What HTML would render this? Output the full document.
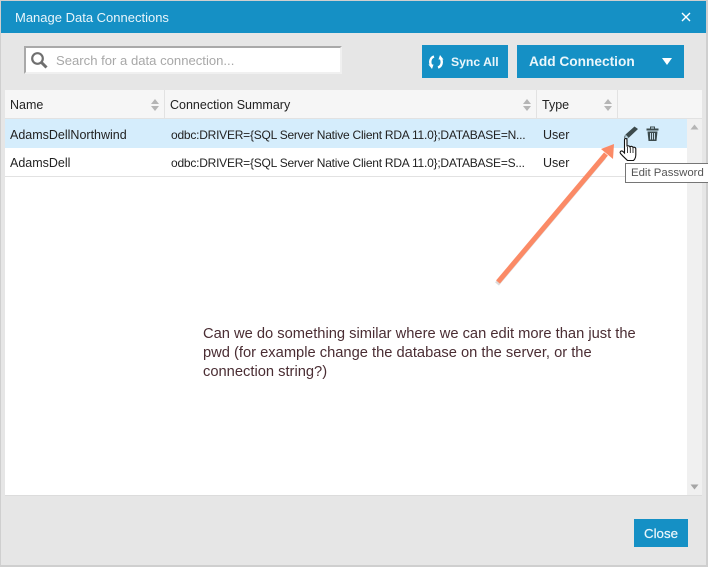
<!DOCTYPE html>
<html>
<head>
<meta charset="utf-8">
<style>
html,body{margin:0;padding:0;}
body{width:708px;height:567px;overflow:hidden;position:relative;background:#e6e6e6;font-family:"Liberation Sans",sans-serif;}
.a{position:absolute;}
.t{position:absolute;white-space:nowrap;font-size:12.5px;line-height:16px;color:#222;}
.s{font-size:12px;letter-spacing:-0.23px;}
.b{font-weight:bold;}
</style>
</head>
<body>
<div class="a" style="left:0;top:0;width:705px;height:564px;border:1px solid #cfcfcf;border-width:1px 2px 2px 1px;"></div>
<div class="a" style="left:1px;top:1px;width:705px;height:32px;background:#1590c5;"></div>
<div class="t" style="left:15px;top:10px;color:#e8f5fb;font-size:13px;">Manage Data Connections</div>
<svg class="a" style="left:681px;top:12px" width="10" height="10" viewBox="0 0 10 10"><path d="M1 1L9 9M9 1L1 9" stroke="#fff" stroke-width="1.4"/></svg>

<div class="a" style="left:24px;top:46px;width:318px;height:28px;background:#fff;box-sizing:border-box;border-top:2px solid #a9a9a9;border-left:2px solid #a9a9a9;border-right:2px solid #f0f0f0;border-bottom:2px solid #f0f0f0;"></div>
<svg class="a" style="left:30px;top:51px" width="19" height="19" viewBox="0 0 19 19"><circle cx="7.500" cy="7.500" r="5.300" fill="none" stroke="#6f6f6f" stroke-width="2.200"/><path d="M11.500 11.500L16.500 16.500" stroke="#6f6f6f" stroke-width="3"/></svg>
<div class="t" style="left:56px;top:53px;color:#a8a8a8;font-size:13.100px;">Search for a data connection...</div>

<div class="a" style="left:422px;top:45px;width:86px;height:33px;background:#1590c5;"></div>
<svg class="a" style="left:427px;top:53px" width="18" height="18" viewBox="0 0 18 18"><path d="M7 3.500C3.500 4.500 2 9 4.500 13" fill="none" stroke="#fff" stroke-width="2.400"/><path d="M1.500 11.500L6.500 11.500L5 16Z" fill="#fff"/><path d="M11 14.500C14.500 13.500 16 9 13.500 5" fill="none" stroke="#fff" stroke-width="2.400"/><path d="M16.500 6.500L11.500 6.500L13 2Z" fill="#fff"/></svg>
<div class="t b" style="left:451px;top:54px;color:#eaf6fb;font-size:12.200px;">Sync All</div>
<div class="a" style="left:517px;top:45px;width:167px;height:33px;background:#1590c5;"></div>
<div class="t b" style="left:529px;top:54px;color:#eaf6fb;font-size:13.700px;">Add Connection</div>
<svg class="a" style="left:661px;top:57px" width="12" height="9" viewBox="0 0 12 9"><path d="M1 1H11L6 8Z" fill="#fff"/></svg>

<!-- grid -->
<div class="a" style="left:5px;top:90px;width:697px;height:405px;background:#fff;border-bottom:1px solid #dcdcdc;"></div>
<div class="a" style="left:5px;top:90px;width:697px;height:28px;background:#f6f6f6;border-bottom:1px solid #e2e2e2;"></div>
<div class="a" style="left:164px;top:90px;width:1px;height:28px;background:#e2e2e2;"></div>
<div class="a" style="left:536px;top:90px;width:1px;height:28px;background:#e2e2e2;"></div>
<div class="a" style="left:617px;top:90px;width:1px;height:28px;background:#e2e2e2;"></div>
<div class="t" style="left:10px;top:97px;">Name</div>
<div class="t" style="left:170px;top:97px;">Connection Summary</div>
<div class="t" style="left:542px;top:97px;">Type</div>
<svg class="a" style="left:150px;top:98px" width="10" height="14" viewBox="0 0 10 14"><path d="M5 1L9 6H1ZM1 8H9L5 13Z" fill="#b5b5b5"/></svg>
<svg class="a" style="left:522px;top:98px" width="10" height="14" viewBox="0 0 10 14"><path d="M5 1L9 6H1ZM1 8H9L5 13Z" fill="#b5b5b5"/></svg>
<svg class="a" style="left:603px;top:98px" width="10" height="14" viewBox="0 0 10 14"><path d="M5 1L9 6H1ZM1 8H9L5 13Z" fill="#b5b5b5"/></svg>

<div class="a" style="left:5px;top:119px;width:682px;height:29px;background:#d5edfc;"></div>
<div class="a" style="left:5px;top:176px;width:682px;height:1px;background:#e2e2e2;"></div>
<div class="a" style="left:687px;top:119px;width:15px;height:376px;background:#f0f0f0;"></div>
<svg class="a" style="left:690px;top:124px" width="9" height="6" viewBox="0 0 9 6"><path d="M4.500 0.500L8.500 5.500H0.500Z" fill="#b5b5b5"/></svg>
<svg class="a" style="left:690px;top:484px" width="9" height="6" viewBox="0 0 9 6"><path d="M0.500 0.500H8.500L4.500 5.500Z" fill="#a5a5a5"/></svg>

<div class="t" style="left:10px;top:127px;">AdamsDellNorthwind</div>
<div class="t s" style="left:171px;top:127px;">odbc:DRIVER={SQL Server Native Client RDA 11.0};DATABASE=N...</div>
<div class="t" style="left:543px;top:127px;">User</div>
<div class="t" style="left:10px;top:155px;">AdamsDell</div>
<div class="t s" style="left:171px;top:155px;">odbc:DRIVER={SQL Server Native Client RDA 11.0};DATABASE=S...</div>
<div class="t" style="left:543px;top:155px;">User</div>

<!-- pencil -->
<svg class="a" style="left:622px;top:125px" width="17" height="16" viewBox="0 0 17 16"><path d="M12.500 1.500L16 4L7 12.500C5.500 14 3 14.500 2.500 13.500C2 12.500 2.500 10.500 3.500 9.500Z" fill="#3c4a4c"/><path d="M3.500 9.500L6.500 12.500L3 14Z" fill="#b9d3df"/></svg>
<!-- trash -->
<svg class="a" style="left:645px;top:126px" width="15" height="16" viewBox="0 0 15 16"><path d="M1.500 2.500H13.500V4.500H1.500Z" fill="#3c4a4c"/><path d="M5.500 2.500V1H9.500V2.500" fill="none" stroke="#3c4a4c"/><path d="M2.500 5.500H12.500L11.500 15H3.500Z" fill="#3c4a4c"/><path d="M5.500 7V13.500M7.500 7V13.500M9.500 7V13.500" stroke="#d5edfc" stroke-width="0.900"/></svg>
<!-- hand cursor -->
<svg class="a" style="left:618px;top:137px" width="22" height="25" viewBox="0 0 22 25"><path d="M6.500 3C6.500 1 9 1 9 3V9.500C9.500 8.500 11.500 8.500 12 10C12.500 9 14.500 9 15 10.500C15.500 10 17.800 10 17.800 12V18C17.800 21 16.500 22.500 15.500 23.500H9.500C8 22 5.500 20 2.500 16.500C1.500 15 3 13 5 14.500L6.500 16Z" fill="#fff" stroke="#111" stroke-width="1.100"/><path d="M9.500 10V16M12.300 10.500V16M15 11V16" stroke="#111" stroke-width="0.800"/></svg>

<!-- tooltip -->
<div class="a" style="left:625px;top:163px;width:90px;height:20px;box-sizing:border-box;background:#fff;border:1px solid #767676;"></div>
<div class="t" style="left:631px;top:165px;color:#555;font-size:11.400px;">Edit Password</div>

<!-- arrow -->
<svg class="a" style="left:480px;top:130px" width="150" height="160" viewBox="0 0 150 160"><path d="M18 153L125 26" stroke="#9a9a9a" stroke-opacity=".35" stroke-width="5" transform="translate(-1 1)"/><path d="M18 152L126 24" stroke="#fb8a66" stroke-width="5"/><path d="M134 14L133 29L121 19Z" fill="#fb8a66"/></svg>

<div class="t" style="left:203px;top:325px;font-size:14.700px;line-height:19px;color:#4a2d33;">Can we do something similar where we can edit more than just the<br>pwd (for example change the database on the server, or the<br>connection string?)</div>

<div class="a" style="left:634px;top:519px;width:54px;height:28px;background:#1590c5;"></div>
<div class="t" style="left:644px;top:526px;color:#eaf6fb;font-size:13.300px;-webkit-text-stroke:0.2px #eaf6fb;">Close</div>
</body>
</html>
